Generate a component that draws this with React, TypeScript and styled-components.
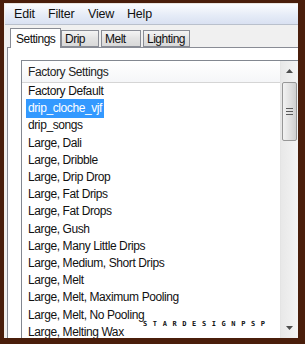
import styled, { createGlobalStyle } from 'styled-components'

const GlobalStyle = createGlobalStyle`
  html, body {
    margin: 0;
    padding: 0;
    background: #4a1e0b;
  }
`

const Frame = styled.div`
  width: 305px;
  height: 344px;
  box-sizing: border-box;
  padding: 3px 7px 6px 4px;
  background: #4a1e0b;
  font-family: 'Liberation Sans', Arial, sans-serif;
`

const Window = styled.div`
  height: 100%;
  display: flex;
  flex-direction: column;
  background: #f0f0f0;
  border-left: 1px solid #f4efe9;
  border-top: 1px solid #e8e4e0;
  box-sizing: border-box;
`

const MenuBar = styled.div`
  display: flex;
  height: 20px;
  align-items: center;
  padding-left: 9px;
  background: linear-gradient(#fbfcfe, #e6ecf7 55%, #d9e1f2);
  border-bottom: 1px solid #b9c0cc;
  font-size: 12.5px;
  letter-spacing: -0.2px;
  color: #111;
`

const MenuItem = styled.span<{ w: number }>`
  width: ${p => p.w}px;
`

const TabStrip = styled.div`
  display: flex;
  align-items: flex-end;
  padding: 3px 0 0 5px;
  height: 19px;
  position: relative;
  z-index: 1;
`

const Tab = styled.div<{ active?: boolean; w: number }>`
  box-sizing: border-box;
  width: ${p => p.w}px;
  height: ${p => (p.active ? 20 : 17)}px;
  margin-bottom: ${p => (p.active ? -1 : 0)}px;
  margin-right: ${p => (p.active ? 0 : 2)}px;
  padding: 0 ${p => (p.active ? 5 : 3)}px;
  border: 1px solid #898c95;
  border-bottom: ${p => (p.active ? 'none' : '1px solid #898c95')};
  background: ${p => (p.active ? '#fff' : 'linear-gradient(#f4f4f4, #e3e3e3 50%, #d9d9d9)')};
  display: flex;
  align-items: center;
  font-size: 12px;
  letter-spacing: -0.5px;
  color: #111;
`

const Panel = styled.div`
  flex: 1;
  margin-left: 2px;
  background: #fff;
  border-top: 1px solid #898c95;
  border-left: 1px solid #898c95;
  padding: 12px 0 0 13px;
  display: flex;
  min-height: 0;
`

const ListBox = styled.div`
  flex: 1;
  display: flex;
  border: 1px solid #828790;
  border-bottom: none;
  border-right: none;
  background: #fff;
  min-height: 0;
  overflow: hidden;
`

const ListColumn = styled.div`
  flex: 1;
  display: flex;
  flex-direction: column;
`

const Header = styled.div`
  height: 21px;
  flex-shrink: 0;
  display: flex;
  align-items: center;
  padding-left: 6px;
  background: linear-gradient(#ffffff, #f5f6f8);
  border-bottom: 1px solid #d5d5d5;
  font-size: 12px;
  letter-spacing: -0.4px;
  color: #222;
`

const Row = styled.div`
  height: 17.2px;
  flex-shrink: 0;
  display: flex;
  align-items: center;
  padding-left: 4px;
  font-size: 12px;
  letter-spacing: -0.4px;
  color: #111;
  white-space: nowrap;
  position: relative;
`

const RowLabel = styled.span<{ selected?: boolean }>`
  padding: 1px 2px;
  line-height: 17px;
  background: ${p => (p.selected ? '#3399ff' : 'transparent')};
  color: ${p => (p.selected ? '#fff' : '#111')};
`

const Watermark = styled.span`
  position: absolute;
  left: 121px;
  top: 14px;
  font-family: 'DejaVu Sans Mono', monospace;
  font-size: 7px;
  font-weight: bold;
  letter-spacing: 5.6px;
  color: #111;
`

const ScrollBar = styled.div`
  width: 17px;
  display: flex;
  flex-direction: column;
  background: linear-gradient(90deg, #e8e8e8, #f4f4f4);
  border-left: 1px solid #e4e4e4;
`

const ArrowButton = styled.div`
  height: 20px;
  display: flex;
  align-items: center;
  justify-content: center;
`

const Thumb = styled.div`
  height: 57px;
  margin: 1px 1px 0 1px;
  border: 1px solid #979797;
  border-radius: 2px;
  background: linear-gradient(90deg, #f2f2f2, #e2e2e2 50%, #cfcfcf);
  display: flex;
  align-items: center;
  justify-content: center;
`

const Track = styled.div`
  flex: 1;
`

const Arrow = ({ down }: { down?: boolean }) => (
  <svg width="7" height="4" viewBox="0 0 7 4">
    <path d={down ? 'M0 0h7L3.5 4z' : 'M3.5 0L7 4H0z'} fill="#4d4d4d" />
  </svg>
)

const Grip = () => (
  <svg width="7" height="7" viewBox="0 0 7 7">
    <path d="M0 0.5h7M0 3.5h7M0 6.5h7" stroke="#5a5a5a" strokeWidth="1" />
  </svg>
)

const items = [
  'Factory Default',
  'drip_cloche_vjf',
  'drip_songs',
  'Large, Dali',
  'Large, Dribble',
  'Large, Drip Drop',
  'Large, Fat Drips',
  'Large, Fat Drops',
  'Large, Gush',
  'Large, Many Little Drips',
  'Large, Medium, Short Drips',
  'Large, Melt',
  'Large, Melt, Maximum Pooling',
  'Large, Melt, No Pooling',
  'Large, Melting Wax',
]

const App = () => (
  <>
    <GlobalStyle />
    <Frame>
      <Window>
        <MenuBar>
          <MenuItem w={34}>Edit</MenuItem>
          <MenuItem w={40}>Filter</MenuItem>
          <MenuItem w={39}>View</MenuItem>
          <MenuItem w={30}>Help</MenuItem>
        </MenuBar>
        <TabStrip>
          <Tab active w={51}>Settings</Tab>
          <Tab w={38}>Drip</Tab>
          <Tab w={40}>Melt</Tab>
          <Tab w={47}>Lighting</Tab>
        </TabStrip>
        <Panel>
          <ListBox>
            <ListColumn>
              <Header>Factory Settings</Header>
              {items.map(item => (
                <Row key={item}>
                  <RowLabel selected={item === 'drip_cloche_vjf'}>{item}</RowLabel>
                  {item === 'Large, Melt, No Pooling' && <Watermark>STARDESIGNPSP</Watermark>}
                </Row>
              ))}
            </ListColumn>
            <ScrollBar>
              <ArrowButton>
                <Arrow />
              </ArrowButton>
              <Thumb>
                <Grip />
              </Thumb>
              <Track />
              <ArrowButton>
                <Arrow down />
              </ArrowButton>
            </ScrollBar>
          </ListBox>
        </Panel>
      </Window>
    </Frame>
  </>
)

export default App
